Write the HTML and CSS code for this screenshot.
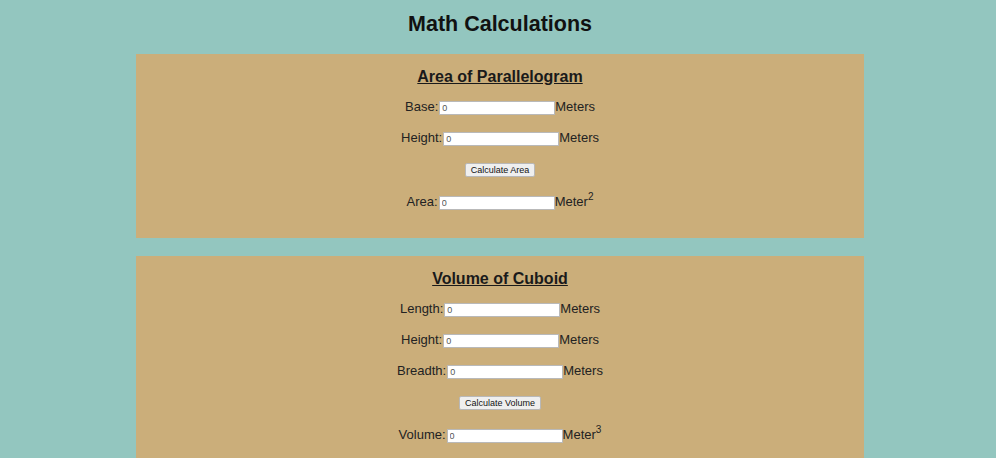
FILE: index.html
```html
<!DOCTYPE html>
<html lang="en">
<head>
<meta charset="utf-8">
<title>Math Calculations</title>
<link rel="stylesheet" href="styles.css">
</head>
<body>
<h1 class="page-title">Math Calculations</h1>

<section class="panel">
  <h2 class="panel-title">Area of Parallelogram</h2>
  <div class="row"><label>Base:</label><input class="field" type="text" value="0"><span>Meters</span></div>
  <div class="row"><label>Height:</label><input class="field" type="text" value="0"><span>Meters</span></div>
  <div class="row row-btn"><button class="btn">Calculate Area</button></div>
  <div class="row row-result"><label>Area:</label><input class="field" type="text" value="0"><span>Meter<sup>2</sup></span></div>
</section>

<section class="panel">
  <h2 class="panel-title">Volume of Cuboid</h2>
  <div class="row"><label>Length:</label><input class="field" type="text" value="0"><span>Meters</span></div>
  <div class="row"><label>Height:</label><input class="field" type="text" value="0"><span>Meters</span></div>
  <div class="row"><label>Breadth:</label><input class="field" type="text" value="0"><span>Meters</span></div>
  <div class="row row-btn"><button class="btn">Calculate Volume</button></div>
  <div class="row row-result"><label>Volume:</label><input class="field" type="text" value="0"><span>Meter<sup>3</sup></span></div>
</section>
</body>
</html>
```

FILE: styles.css
```css
html, body {
  margin: 0;
  padding: 0;
  background: #93c6bf;
}
body {
  font-family: "Liberation Sans", Arial, sans-serif;
  color: #222;
  padding: 0 0 0 4px;
  overflow: hidden;
}
.page-title {
  margin: 0;
  height: 54px;
  line-height: 48px;
  font-size: 21.5px;
  font-weight: bold;
  text-align: center;
  color: #111;
}
.panel {
  width: 728px;
  margin: 0 auto 18px;
  background: #cbae7a;
  padding: 8px 0 21px;
  display: flex;
  flex-direction: column;
  align-items: center;
}
.panel-title {
  margin: 0;
  height: 29px;
  line-height: 29px;
  font-size: 16px;
  font-weight: bold;
  text-decoration: underline;
  color: #1a1a1a;
}
.row {
  height: 31px;
  display: flex;
  align-items: center;
  justify-content: center;
  font-size: 13px;
  line-height: 16px;
}
.row-btn {
  height: 30px;
  padding-top: 2px;
}
.row-result {
  height: 31px;
  padding-top: 1px;
}
.row label {
  margin-right: 1px;
}
.field {
  box-sizing: border-box;
  width: 116px;
  height: 14px;
  margin: 2px 0 0;
  padding: 0 2px;
  border: 1px solid #b9b9b9;
  background: #fff;
  font-family: "Liberation Sans", Arial, sans-serif;
  font-size: 9px;
  color: #555;
  outline: none;
}
.row sup {
  font-size: 10px;
  line-height: 0;
  vertical-align: 6px;
}
.btn {
  box-sizing: border-box;
  height: 14px;
  padding: 0 5px;
  border: 1px solid #b8b8b8;
  border-radius: 2px;
  background: #efefef;
  font-family: "Liberation Sans", Arial, sans-serif;
  font-size: 9px;
  line-height: 12px;
  color: #111;
}
```
